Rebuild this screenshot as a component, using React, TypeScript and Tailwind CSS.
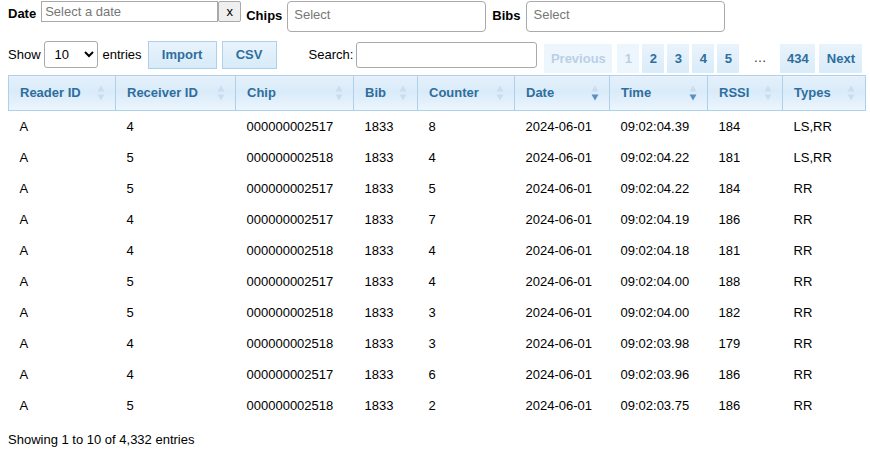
import React from 'react';

const rows = [
  ['A', '4', '000000002517', '1833', '8', '2024-06-01', '09:02:04.39', '184', 'LS,RR'],
  ['A', '5', '000000002518', '1833', '4', '2024-06-01', '09:02:04.22', '181', 'LS,RR'],
  ['A', '5', '000000002517', '1833', '5', '2024-06-01', '09:02:04.22', '184', 'RR'],
  ['A', '4', '000000002517', '1833', '7', '2024-06-01', '09:02:04.19', '186', 'RR'],
  ['A', '4', '000000002518', '1833', '4', '2024-06-01', '09:02:04.18', '181', 'RR'],
  ['A', '5', '000000002517', '1833', '4', '2024-06-01', '09:02:04.00', '188', 'RR'],
  ['A', '5', '000000002518', '1833', '3', '2024-06-01', '09:02:04.00', '182', 'RR'],
  ['A', '4', '000000002518', '1833', '3', '2024-06-01', '09:02:03.98', '179', 'RR'],
  ['A', '4', '000000002517', '1833', '6', '2024-06-01', '09:02:03.96', '186', 'RR'],
  ['A', '5', '000000002518', '1833', '2', '2024-06-01', '09:02:03.75', '186', 'RR'],
];

const columns = [
  { name: 'Reader ID', w: 'w-[107px]' },
  { name: 'Receiver ID', w: 'w-[120px]' },
  { name: 'Chip', w: 'w-[118px]' },
  { name: 'Bib', w: 'w-[64px]' },
  { name: 'Counter', w: 'w-[97px]' },
  { name: 'Date', w: 'w-[95px]', desc: true },
  { name: 'Time', w: 'w-[98px]', desc: true },
  { name: 'RSSI', w: 'w-[75px]' },
  { name: 'Types', w: 'w-[83px]' },
];

const SortIcon = ({ desc }: { desc?: boolean }) => (
  <svg width="8" height="18" viewBox="0 0 8 18" className="shrink-0">
    <path d="M4 1.5 L7.5 7.5 L0.5 7.5 Z" fill="#c9ddef" />
    <path d="M0.5 10.5 L7.5 10.5 L4 16.5 Z" fill={desc ? '#5a8fc2' : '#c9ddef'} />
  </svg>
);

const blueBtn =
  'shrink-0 border border-[#aed0ea] bg-[linear-gradient(#e9f3fc,#d7ebf9)] text-[#2e6e9e] font-bold';
const pageBtn =
  'shrink-0 h-[29px] flex items-center justify-center font-bold text-[#2e6e9e] bg-[linear-gradient(#e9f3fc,#d9ecf9)]';

export default function App() {
  return (
    <div className="font-['Liberation_Sans',Arial,sans-serif] text-[13px] text-black bg-white w-[870px] h-[455px] px-2">
      {/* Filters */}
      <div className="flex items-start h-[37px] pt-px">
        <span className="font-bold mt-[3px] mr-[5px]">Date</span>
        <input
          placeholder="Select a date"
          className="w-[177px] h-[21px] border border-[#a9a9a9] px-[3px] text-[13px] placeholder:text-[#777] outline-none"
        />
        <button className="w-[23px] h-[21px] border border-[#a9a9a9] bg-[#efefef] text-[13px] leading-none rounded-[2px]">x</button>
        <span className="font-bold mt-[5px] ml-[5px] mr-[5px]">Chips</span>
        <input
          placeholder="Select"
          className="w-[199px] h-[31px] border border-[#aaa] rounded-[4px] px-[6px] pb-[4px] text-[13px] placeholder:text-[#777] outline-none"
        />
        <span className="font-bold mt-[5px] ml-[6px] mr-[6px]">Bibs</span>
        <input
          placeholder="Select"
          className="w-[199px] h-[31px] border border-[#aaa] rounded-[4px] px-[6px] pb-[4px] text-[13px] placeholder:text-[#777] outline-none"
        />
      </div>

      {/* Toolbar */}
      <div className="flex items-start h-[38px] pt-[4px]">
        <div className="flex items-center h-[27px] shrink-0">
          <span>Show</span>
          <select className="ml-[3px] w-[54px] h-[27px] border border-[#aaa] rounded-[3px] pl-[6px] text-[13px] bg-white">
            <option>10</option>
          </select>
          <span className="ml-[5px]">entries</span>
        </div>
        <button className={`${blueBtn} ml-[6px] w-[69px] h-[28px]`}>Import</button>
        <button className={`${blueBtn} ml-[5px] w-[55px] h-[28px]`}>CSV</button>
        <div className="flex items-center h-[27px] ml-[32px] shrink-0">
          <span>Search:</span>
          <input className="ml-[3px] w-[181px] h-[26px] border border-[#aaa] rounded-[3px] outline-none" />
        </div>
        <div className="flex items-center ml-[7px] mt-[3px] gap-[3px] shrink-0">
          <span className="shrink-0 h-[29px] w-[68px] flex items-center justify-center font-bold text-[#b9d0e6] bg-[#eef6fd]">Previous</span>
          <span className="shrink-0 h-[29px] w-[22px] ml-[2px] flex items-center justify-center font-bold text-[#b9d0e6] bg-[#eef6fd]">1</span>
          {['2', '3', '4', '5'].map((p) => (
            <span key={p} className={`${pageBtn} w-[22px]`}>
              {p}
            </span>
          ))}
          <span className="shrink-0 w-[35px] text-center text-[#333] pb-[2px]">…</span>
          <span className={`${pageBtn} w-[35px]`}>434</span>
          <span className={`${pageBtn} w-[43px] ml-px`}>Next</span>
        </div>
      </div>

      {/* Table */}
      <table className="border-collapse table-fixed w-[857px]">
        <thead>
          <tr>
            {columns.map((c) => (
              <th
                key={c.name}
                className={`${c.w} h-[35px] border border-[#aed0ea] bg-[linear-gradient(#e4f0fb_0%,#d9ebf9_45%,#ecf5fd_100%)] text-left font-bold text-[#2e6e9e] pl-[11px] pr-[10px] p-0`}
              >
                <div className="flex items-center justify-between">
                  <span>{c.name}</span>
                  <SortIcon desc={c.desc} />
                </div>
              </th>
            ))}
          </tr>
        </thead>
        <tbody>
          {rows.map((r, i) => (
            <tr key={i} className="h-[31px]">
              {r.map((v, j) => (
                <td key={j} className="pl-[11px] p-0 pt-[1px]">
                  {v}
                </td>
              ))}
            </tr>
          ))}
        </tbody>
      </table>

      <div className="mt-[9px]">Showing 1 to 10 of 4,332 entries</div>
    </div>
  );
}
